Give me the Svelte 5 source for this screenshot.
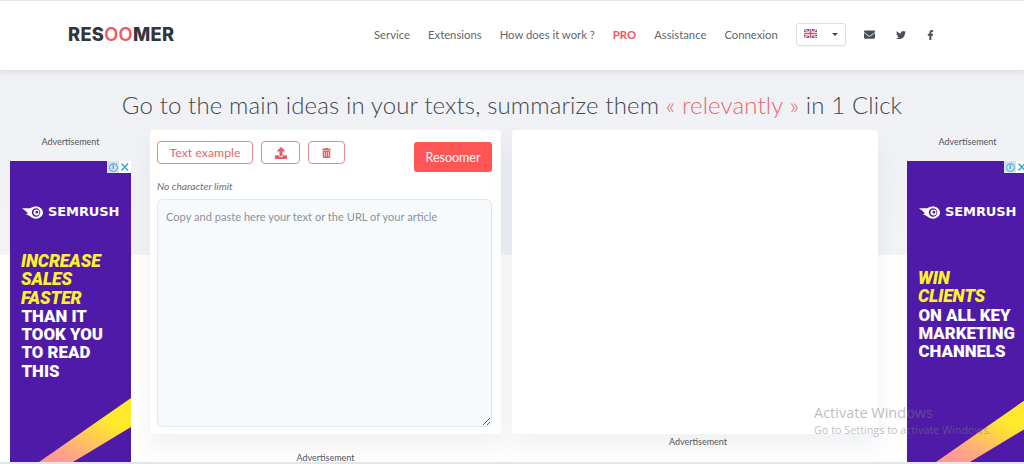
<script>
  const nav = ['Service', 'Extensions', 'How does it work ?', 'PRO', 'Assistance', 'Connexion'];
  const ads = [
    { side: 'left', gap: 'far', hi: ['INCREASE', 'SALES', 'FASTER'], lo: ['THAN IT', 'TOOK YOU', 'TO READ', 'THIS'] },
    { side: 'right', gap: 'near', hi: ['WIN', 'CLIENTS'], lo: ['ON ALL KEY', 'MARKETING', 'CHANNELS'] }
  ];
</script>

{#snippet ad(a)}
  <aside class="adcol">
    <div class="adlabel">Advertisement</div>
    <div class="ad">
      <div class="adchoice">
        <span class="info">i</span>
        <svg class="x" viewBox="0 0 12 12" width="12" height="12" aria-hidden="true"><path d="M2.500 2.500 9 9.500M9 2.500 2.500 9.500" stroke="#45a5cf" stroke-width="1.600" fill="none"/></svg>
      </div>
      <div class="brand">
        <svg viewBox="0 0 24 14" width="21" height="13" aria-hidden="true">
          <path fill="#fff" d="M0 2.200h9.500C11.500 .6 13.500 0 16 0c4.400 0 8 3.100 8 7s-3.600 7-8 7c-2.800 0-5-1-6.800-2.800C7.500 10 5.800 9.300 3.800 8.900 5 8.600 5.800 8.300 6.800 8 5.500 6.300 3.200 4.500 0 2.200z"/>
          <circle cx="16" cy="7" r="4.800" fill="#4f1aa8"/>
          <circle cx="16.500" cy="7" r="3.400" fill="#fff"/>
          <circle cx="17" cy="6.600" r="1.500" fill="#4f1aa8"/>
        </svg>
        <span>SEMRUSH</span>
      </div>
      <div class="copy {a.gap}">
        {#each a.hi as line}<div class="hi">{line}</div>{/each}
        {#each a.lo as line}<div>{line}</div>{/each}
      </div>
      <svg class="stripe" viewBox="0 0 121 65" width="121" height="65" aria-hidden="true">
        <defs>
          <linearGradient id={'g' + a.side} x1="0.9" y1="0.25" x2="0.35" y2="1">
            <stop offset="0.2" stop-color="#ffe92a"/>
            <stop offset="1" stop-color="#ff9c92"/>
          </linearGradient>
        </defs>
        <path fill={'url(#g' + a.side + ')'} d="M29 65 121 1V30L63 65Z"/>
      </svg>
    </div>
  </aside>
{/snippet}

<div class="page">
  <header>
    <div class="logo">RES<span>OO</span>MER</div>
    <nav>
      {#each nav as item}
        <a href="#top" class:pro={item === 'PRO'}>{item}</a>
      {/each}
    </nav>
    <div class="lang">
      <svg viewBox="0 0 60 40" width="13" height="9" aria-hidden="true">
        <rect width="60" height="40" fill="#3d4a9a"/>
        <path d="M0 0 60 40M60 0 0 40" stroke="#fff" stroke-width="8"/>
        <path d="M0 0 60 40M60 0 0 40" stroke="#d9536b" stroke-width="3"/>
        <path d="M30 0V40M0 20H60" stroke="#fff" stroke-width="13"/>
        <path d="M30 0V40M0 20H60" stroke="#d9536b" stroke-width="7"/>
      </svg>
      <i class="caret"></i>
    </div>
    <div class="social">
      <svg class="mail" viewBox="0 0 512 512" aria-hidden="true"><path d="M502.300 190.800c3.900-3.100 9.700-.2 9.700 4.700V400c0 26.500-21.500 48-48 48H48c-26.500 0-48-21.500-48-48V195.600c0-5 5.700-7.800 9.700-4.700 22.400 17.400 52.100 39.500 154.100 113.600 21.100 15.400 56.700 47.800 92.200 47.600 35.700.3 72-32.800 92.300-47.600 102-74.100 131.600-96.300 154-113.700zM256 320c23.200.4 56.600-29.200 73.400-41.400 132.700-96.300 142.800-104.700 173.400-128.700 5.800-4.500 9.200-11.500 9.200-18.900v-19c0-26.500-21.500-48-48-48H48C21.500 64 0 85.500 0 112v19c0 7.400 3.400 14.300 9.200 18.900 30.600 23.900 40.700 32.400 173.400 128.700 16.800 12.200 50.200 41.800 73.400 41.400z"/></svg>
      <svg class="bird" viewBox="0 0 512 512" aria-hidden="true"><path d="M459.370 151.716c.325 4.548.325 9.097.325 13.645 0 138.720-105.583 298.558-298.558 298.558-59.452 0-114.680-17.219-161.137-47.106 8.447.974 16.568 1.299 25.340 1.299 49.055 0 94.213-16.568 130.274-44.832-46.132-.975-84.792-31.188-98.112-72.772 6.498.974 12.995 1.624 19.818 1.624 9.421 0 18.843-1.300 27.614-3.573-48.081-9.747-84.143-51.980-84.143-102.985v-1.299c13.969 7.797 30.214 12.670 47.431 13.319-28.264-18.843-46.781-51.005-46.781-87.391 0-19.492 5.197-37.360 14.294-52.954 51.655 63.675 129.300 105.258 216.365 109.807-1.624-7.797-2.599-15.918-2.599-24.040 0-57.828 46.782-104.934 104.934-104.934 30.213 0 57.502 12.670 76.670 33.137 23.715-4.548 46.456-13.320 66.599-25.340-7.798 24.366-24.366 44.833-46.132 57.827 21.117-2.273 41.584-8.122 60.426-16.243-14.292 20.791-32.161 39.308-52.628 54.253z"/></svg>
      <svg class="fb" viewBox="0 0 320 512" aria-hidden="true"><path d="M279.140 288l14.220-92.660h-88.910v-60.130c0-25.350 12.420-50.060 52.240-50.060h40.420V6.260S260.430 0 225.360 0c-73.220 0-121.080 44.380-121.080 124.720v70.620H22.890V288h81.390v224h100.170V288z"/></svg>
    </div>
  </header>

  <main>
    <h1>Go to the main ideas in your texts, summarize them <em>« relevantly »</em> in 1 Click</h1>
    <div class="columns">
      {@render ad(ads[0])}
      <div class="col col-a">
        <section class="card tool">
          <div class="toolbar">
            <button class="outline text">Text example</button>
            <button class="outline up" aria-label="Upload">
              <svg viewBox="0 0 512 512" width="12" height="12"><path d="M296 384h-80c-13.300 0-24-10.700-24-24V192h-87.700c-17.800 0-26.700-21.500-14.100-34.100L242.300 5.700c7.500-7.500 19.800-7.500 27.300 0l152.200 152.200c12.600 12.600 3.700 34.100-14.100 34.100H320v168c0 13.300-10.700 24-24 24zm216-8v112c0 13.300-10.700 24-24 24H24c-13.300 0-24-10.700-24-24V376c0-13.300 10.700-24 24-24h136v8c0 30.900 25.100 56 56 56h80c30.900 0 56-25.100 56-56v-8h136c13.300 0 24 10.700 24 24z"/></svg>
            </button>
            <button class="outline bin" aria-label="Delete">
              <svg viewBox="0 0 448 512" width="9" height="10"><path d="M32 464a48 48 0 0 0 48 48h288a48 48 0 0 0 48-48V128H32zm272-256a16 16 0 0 1 32 0v224a16 16 0 0 1-32 0zm-96 0a16 16 0 0 1 32 0v224a16 16 0 0 1-32 0zm-96 0a16 16 0 0 1 32 0v224a16 16 0 0 1-32 0zM432 32H312l-9.400-18.700A24 24 0 0 0 281.100 0H166.800a23.720 23.720 0 0 0-21.400 13.300L136 32H16A16 16 0 0 0 0 48v32a16 16 0 0 0 16 16h416a16 16 0 0 0 16-16V48a16 16 0 0 0-16-16z"/></svg>
            </button>
            <button class="primary">Resoomer</button>
          </div>
          <p class="limit">No character limit</p>
          <textarea placeholder="Copy and paste here your text or the URL of your article"></textarea>
        </section>
        <div class="adlabel below-left">Advertisement</div>
      </div>
      <div class="col col-b">
        <section class="card result"></section>
        <div class="adlabel below-right">Advertisement</div>
      </div>
      {@render ad(ads[1])}
    </div>
    <div class="activate">
      <div class="t1">Activate Windows</div>
      <div class="t2">Go to Settings to activate Windows.</div>
    </div>
  </main>
  <div class="footline"></div>
</div>

<style>
  :global(body) { margin: 0; background: #fff; }
  .page {
    width: 1024px; height: 464px; overflow: hidden; position: relative;
    font-family: Lato, "Open Sans", sans-serif; color: #555;
    display: flex; flex-direction: column;
  }
  header {
    position: relative; z-index: 2; flex: none; box-sizing: border-box; height: 70px;
    background: #fff; border-top: 1px solid #e6e7e9;
    box-shadow: 0 1px 6px rgba(60, 70, 90, .16);
    display: flex; align-items: center; padding-left: 68px;
  }
  .logo {
    font: 800 18.300px/1 Inter, sans-serif; color: #33363b;
    letter-spacing: .3px; width: 306px; margin-top: -2px;
  }
  .logo span { color: #ef5a63; font-weight: 600; }
  nav { display: flex; gap: 18px; font-size: 11.300px; margin-top: -2px; }
  nav a { color: #62666c; text-decoration: none; white-space: nowrap; }
  nav a.pro { color: #ef5560; font-weight: 700; }
  .lang {
    box-sizing: border-box; width: 50px; height: 23px; margin-left: 18px; margin-top: -2px;
    border: 1px solid #dcdfe3; border-radius: 3px; background: #fff;
    display: flex; align-items: center; padding-left: 7px; gap: 15px;
    box-shadow: 0 1px 2px rgba(0, 0, 0, .05);
  }
  .lang svg { margin-top: -3px; }
  .caret { width: 0; height: 0; border: 3px solid transparent; border-top: 3px solid #444; border-bottom: 0; }
  .social { display: flex; align-items: center; margin-left: 18px; margin-top: -2px; }
  .social svg { fill: #4a4f5c; display: block; }
  .mail { width: 11px; height: 11px; }
  .bird { width: 10px; height: 10px; margin-left: 21px; }
  .fb { width: 7px; height: 10px; margin-left: 21px; }

  main {
    flex: 1; min-height: 0; position: relative;
    background: linear-gradient(#eff1f5 0, #f1f3f6 185px, #fff 185px);
  }
  h1 {
    margin: 0; padding-top: 21px; height: 39px; text-align: center;
    font: 300 24px/28px Lato, sans-serif; color: #44474c;
    letter-spacing: .13px; white-space: nowrap; width: 1024px;
  }
  h1 em { font-style: normal; color: #e8666e; }
  .columns { display: flex; padding-left: 10px; width: 1100px; box-sizing: border-box; }
  .col-a { width: 351px; margin: 0 11px 0 19px; flex: none; }
  .col-b { width: 366px; margin-right: 29px; flex: none; }
  .adcol { width: 121px; flex: none; }
  .adlabel { font-size: 9px; color: #555; text-align: center; }
  .adcol .adlabel { padding-top: 6px; height: 31px; line-height: 11px; box-sizing: border-box; }
  .ad { position: relative; width: 121px; height: 301px; background: #4f1aa8; overflow: hidden; color: #fff; }
  .adchoice { position: absolute; top: 0; right: 0; width: 24px; height: 12px; display: flex; background: #fff; }
  .info {
    width: 12px; height: 12px; flex: none; position: relative; background: #cfe5f6; color: #3c98c9;
    font: 700 8px/12px "Liberation Sans", sans-serif; text-align: center;
  }
  .info::before { content: ""; position: absolute; inset: 1.500px; border: 1px solid #4aa3d3; border-radius: 50%; }
  .x { display: block; flex: none; }
  .brand { display: flex; align-items: center; gap: 5px; padding: 44px 0 0 12px; height: 14px; }
  .brand span { font: 700 13px/14px "DejaVu Sans", sans-serif; letter-spacing: -.1px; color: #fff; }
  .copy { font: 900 16.800px/18.300px Roboto, sans-serif; padding-left: 11.500px; white-space: nowrap; }
  .copy.far { padding-top: 33px; }
  .copy.near { padding-top: 50px; }
  .hi { color: #fff22a; font-style: italic; font-size: 17.500px; letter-spacing: -.1px; margin-left: -.5px; }
  .stripe { position: absolute; left: 0; bottom: 0; display: block; }

  .card { background: #fff; border-radius: 4px; box-shadow: 0 14px 24px rgba(70, 80, 100, .08); box-sizing: border-box; height: 304px; }
  .tool { padding: 11px 9px 0 7px; }
  .toolbar { display: flex; align-items: flex-start; }
  button { font-family: inherit; cursor: pointer; padding: 0; }
  .outline {
    height: 23px; background: #fff; border: 1px solid #e58a8e; border-radius: 4px; color: #e4666c;
    display: flex; align-items: center; justify-content: center; font-size: 12.300px; box-sizing: border-box;
  }
  .outline svg { fill: #ea5a60; display: block; }
  .text { width: 96px; }
  .up { width: 39px; margin-left: 8px; }
  .bin { width: 37px; margin-left: 8px; }
  .primary {
    margin-left: auto; margin-top: 1px; width: 78px; height: 30px; border: 0; border-radius: 3px;
    background: #ff5555; color: #fff; font-size: 12.500px;
  }
  .limit { margin: 0; height: 27px; line-height: 28px; font-size: 10.200px; font-style: italic; color: #6d7075; }
  textarea {
    display: block; box-sizing: border-box; width: 335px; height: 228px; margin: 0; padding: 10px 8px;
    background: #f7fafc; border: 1px solid #e3e7ea; border-radius: 6px; outline: 0;
    font: 11.100px/1.3 Lato, sans-serif; color: #555;
  }
  textarea::placeholder { color: #8e9296; opacity: 1; }
  .below-left { margin-top: 18px; line-height: 11px; }
  .below-right { margin-top: 2px; line-height: 11px; padding-left: 6px; }
  .activate {
    position: absolute; left: 814px; top: 334px; color: rgba(120, 125, 130, .5);
    font-family: "Open Sans", sans-serif; white-space: nowrap;
  }
  .t1 { font-size: 14.500px; line-height: 18px; }
  .t2 { font-size: 10.800px; line-height: 16px; }
  .footline { position: absolute; left: 0; right: 0; bottom: 0; height: 2px; background: #e3e6e8; }
</style>
